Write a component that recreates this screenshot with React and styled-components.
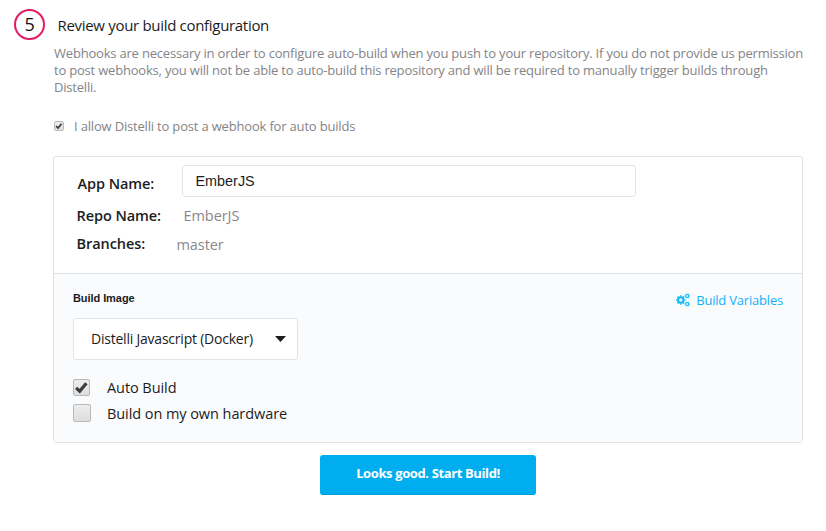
import React from "react";
import styled, { createGlobalStyle } from "styled-components";

const GlobalStyle = createGlobalStyle`
  * { box-sizing: border-box; }
  body { margin: 0; background: #fff; }
`;

const Page = styled.main`
  width: 826px;
  height: 531px;
  padding: 9px 23px 0 53px;
  overflow: hidden;
  font-family: "Open Sans", "Noto Sans", sans-serif;
  font-size: 14.5px;
  letter-spacing: -0.07px;
  color: #1c1c1e;
  white-space: nowrap;
`;

const StepHeader = styled.header`
  display: flex;
  align-items: center;
  height: 31px;
  margin-left: -39px;
`;

const StepNumber = styled.span`
  display: flex;
  align-items: center;
  justify-content: center;
  width: 31px;
  height: 31px;
  border: 2px solid #e31b65;
  border-radius: 50%;
  font-size: 18px;
  line-height: 27px;
  color: #111;
`;

const Title = styled.h1`
  margin: 0 0 0 12.5px;
  font-size: 15px;
  font-weight: 400;
  line-height: 20px;
  letter-spacing: -0.31px;
`;

const Description = styled.p`
  margin: 5px 0 0 1px;
  font-size: 13px;
  line-height: 17px;
  letter-spacing: -0.2px;
  color: #848488;
`;

const ConsentRow = styled.label`
  display: flex;
  align-items: center;
  height: 18px;
  margin: 21px 0 0 1px;
  gap: 10px;
  font-size: 13px;
  letter-spacing: -0.18px;
  color: #848488;
`;

const CheckFrame = styled.span`
  flex: none;
  display: flex;
  width: ${(p) => p.$size}px;
  height: ${(p) => p.$size}px;
  border: 1px solid #b9b9b9;
  border-radius: 2px;
  background: linear-gradient(#ededed, #dedede);
  svg { display: block; width: 100%; height: 100%; }
`;

const Card = styled.section`
  width: 750px;
  height: 287px;
  margin-top: 21px;
  border: 1px solid #e3e4e6;
  border-radius: 3px;
  overflow: hidden;
`;

const Details = styled.div`
  height: 117px;
  padding: 8px 0 0 22.5px;
  border-bottom: 1px solid #dfe1e4;
`;

const DetailRow = styled.div`
  display: flex;
  align-items: center;
  height: ${(p) => p.$height}px;
`;

const DetailLabel = styled.span`
  width: ${(p) => p.$width}px;
  padding: ${(p) => p.$inset || "0"};
  font-weight: 600;
  line-height: 20px;
`;

const DetailValue = styled.span`
  line-height: 20px;
  color: #88888c;
  padding-top: ${(p) => p.$drop || 0}px;
`;

const NameInput = styled.input`
  width: 454px;
  height: 32px;
  padding: 0 12.5px;
  border: 1px solid #e3e4e6;
  border-radius: 3px;
  outline: none;
  background: #fff;
  color: #1c1c1e;
  font: 14.4px "Liberation Sans", Arial, sans-serif;
`;

const BuildOptions = styled.div`
  height: 168px;
  padding: 16px 19px 0;
  background: #fafbfd;
`;

const OptionsHeader = styled.div`
  display: flex;
  justify-content: space-between;
  height: 28px;
`;

const ImageHeading = styled.h2`
  margin: 0;
  font: bold 11px/16px "Liberation Sans", Arial, sans-serif;
`;

const VariablesLink = styled.a`
  display: flex;
  align-items: center;
  height: 20px;
  gap: 6px;
  font-size: 13px;
  letter-spacing: -0.2px;
  color: #14b0f8;
`;

const ImageSelect = styled.button`
  display: flex;
  align-items: center;
  justify-content: space-between;
  width: 225px;
  height: 42px;
  padding: 0 11px 2px 17px;
  border: 1px solid #e3e4e6;
  border-radius: 3px;
  background: #fff;
  font: 14px "Open Sans", sans-serif;
  letter-spacing: -0.22px;
  color: #1c1c1e;
  svg { margin-top: 2px; }
`;

const OptionList = styled.div`
  padding-top: 15px;
`;

const OptionRow = styled.label`
  display: flex;
  height: 26px;
`;

const OptionCheck = styled.span`
  padding-top: ${(p) => p.$drop}px;
`;

const OptionText = styled.span`
  margin: 3px 0 0 ${(p) => p.$gap}px;
  line-height: 20px;
`;

const StartButton = styled.button`
  display: block;
  width: 216px;
  height: 40px;
  margin: 12px 0 0 267px;
  padding: 0 0 3px;
  border: 0;
  border-bottom: 1px solid #009fdc;
  border-radius: 3px;
  background: #00aeef;
  color: #fff;
  font: bold 13px "Open Sans", sans-serif;
  letter-spacing: -0.38px;
`;

function Checkbox({ size, checked }) {
  return (
    <CheckFrame $size={size}>
      {checked && (
        <svg viewBox="0 0 16 16">
          <path d="M2.2 8.4 6.1 11.9 13.2 3.4" fill="none" stroke="#3d3d3d" strokeWidth="3.5" />
        </svg>
      )}
    </CheckFrame>
  );
}

function GearsIcon() {
  return (
    <svg width="14" height="14" viewBox="0 0 14 14" fill="none" stroke="#0cb8f6">
      <circle cx="4.8" cy="7" r="2.7" strokeWidth="2" />
      <circle cx="4.8" cy="7" r="4.1" strokeWidth="1.2" pathLength="16" strokeDasharray="1 1" strokeDashoffset="0.5" />
      <circle cx="11.3" cy="3" r="1.5" strokeWidth="1.2" />
      <circle cx="11.3" cy="3" r="2.3" strokeWidth="0.7" pathLength="12" strokeDasharray="1 1" strokeDashoffset="0.5" />
      <circle cx="11.3" cy="11" r="1.5" strokeWidth="1.2" />
      <circle cx="11.3" cy="11" r="2.3" strokeWidth="0.7" pathLength="12" strokeDasharray="1 1" strokeDashoffset="0.5" />
    </svg>
  );
}

export default function App() {
  return (
    <>
      <GlobalStyle />
      <Page>
        <StepHeader>
          <StepNumber>5</StepNumber>
          <Title>Review your build configuration</Title>
        </StepHeader>
        <Description>
          Webhooks are necessary in order to configure auto-build when you push to your repository. If you do not provide us permission
          <br />
          to post webhooks, you will not be able to auto-build this repository and will be required to manually trigger builds through
          <br />
          Distelli.
        </Description>
        <ConsentRow>
          <Checkbox size={10} checked />
          <span>I allow Distelli to post a webhook for auto builds</span>
        </ConsentRow>
        <Card>
          <Details>
            <DetailRow $height={32}>
              <DetailLabel $width={105.5} $inset="5px 0 0 1px">App Name:</DetailLabel>
              <NameInput defaultValue="EmberJS" />
            </DetailRow>
            <DetailRow $height={37}>
              <DetailLabel $width={107}>Repo Name:</DetailLabel>
              <DetailValue>EmberJS</DetailValue>
            </DetailRow>
            <DetailRow $height={20}>
              <DetailLabel $width={100}>Branches:</DetailLabel>
              <DetailValue $drop={2}>master</DetailValue>
            </DetailRow>
          </Details>
          <BuildOptions>
            <OptionsHeader>
              <ImageHeading>Build Image</ImageHeading>
              <VariablesLink>
                <GearsIcon />
                Build Variables
              </VariablesLink>
            </OptionsHeader>
            <ImageSelect>
              Distelli Javascript (Docker)
              <svg width="11" height="6" viewBox="0 0 11 6">
                <path d="M0 0H11L5.5 6Z" fill="#1c1c1e" />
              </svg>
            </ImageSelect>
            <OptionList>
              <OptionRow>
                <OptionCheck $drop={4}><Checkbox size={17} checked /></OptionCheck>
                <OptionText $gap={17}>Auto Build</OptionText>
              </OptionRow>
              <OptionRow>
                <OptionCheck $drop={3}><Checkbox size={18} /></OptionCheck>
                <OptionText $gap={16}>Build on my own hardware</OptionText>
              </OptionRow>
            </OptionList>
          </BuildOptions>
        </Card>
        <StartButton>Looks good. Start Build!</StartButton>
      </Page>
    </>
  );
}
